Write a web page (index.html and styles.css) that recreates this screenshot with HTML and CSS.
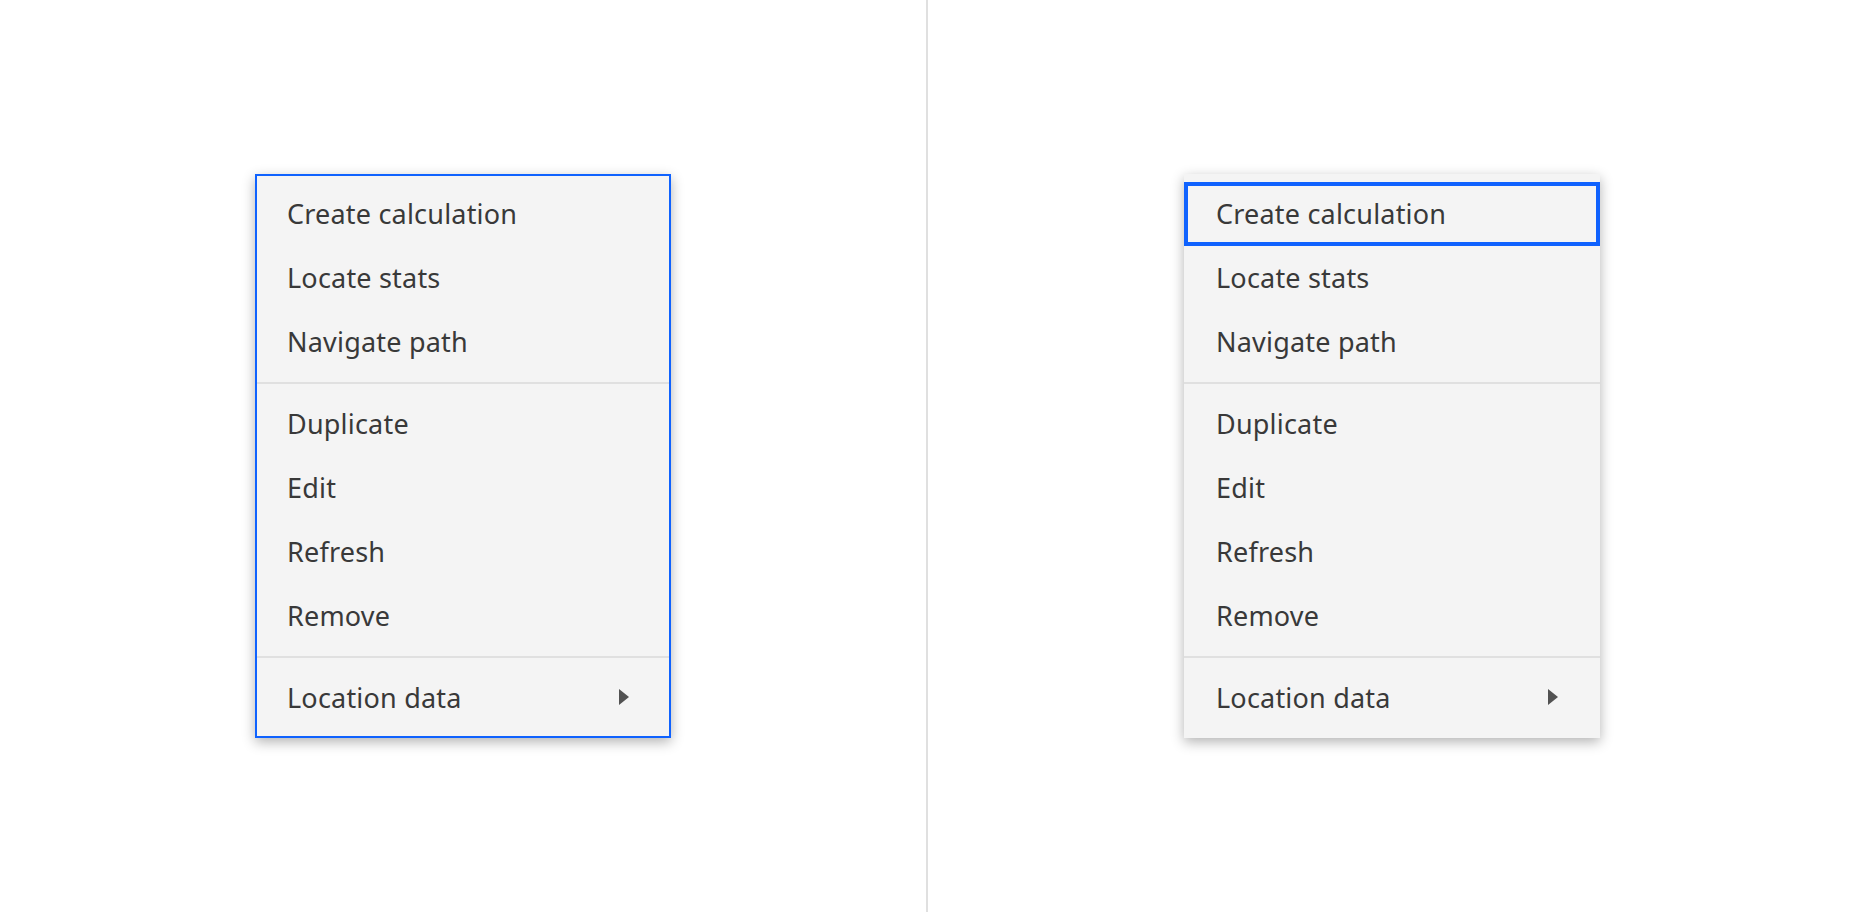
FILE: index.html
```html
<!DOCTYPE html>
<html lang="en">
<head>
<meta charset="utf-8">
<title>Menu</title>
<link rel="stylesheet" href="styles.css">
</head>
<body>
<main class="stage">
  <section class="panel">
    <ul class="menu menu--focused">
      <li class="item">Create calculation</li>
      <li class="item">Locate stats</li>
      <li class="item">Navigate path</li>
      <li class="divider"></li>
      <li class="item">Duplicate</li>
      <li class="item">Edit</li>
      <li class="item">Refresh</li>
      <li class="item">Remove</li>
      <li class="divider"></li>
      <li class="item item--sub">Location data
        <svg class="caret" width="10" height="16" viewBox="0 0 10 16"><path d="M0 0 L10 8 L0 16 Z" fill="#525252"/></svg>
      </li>
    </ul>
  </section>
  <section class="panel panel--right">
    <ul class="menu">
      <li class="item item--focus">Create calculation</li>
      <li class="item">Locate stats</li>
      <li class="item">Navigate path</li>
      <li class="divider"></li>
      <li class="item">Duplicate</li>
      <li class="item">Edit</li>
      <li class="item">Refresh</li>
      <li class="item">Remove</li>
      <li class="divider"></li>
      <li class="item item--sub">Location data
        <svg class="caret" width="10" height="16" viewBox="0 0 10 16"><path d="M0 0 L10 8 L0 16 Z" fill="#525252"/></svg>
      </li>
    </ul>
  </section>
</main>
</body>
</html>
```

FILE: styles.css
```css
* { box-sizing: border-box; }
html, body { margin: 0; padding: 0; height: 100%; background: #ffffff; }
body { font-family: "Noto Sans", "Open Sans", sans-serif; }

.stage {
  display: flex;
  width: 100%;
  height: 100%;
}

.panel {
  flex: 0 0 926px;
  display: flex;
  align-items: center;
  justify-content: center;
}

.panel--right {
  flex: 1 1 auto;
  border-left: 2px solid #e0e0e0;
}

.menu {
  list-style: none;
  margin: 0;
  padding: 8px 0;
  width: 416px;
  background: #f4f4f4;
  box-shadow: 0 4px 12px rgba(0, 0, 0, 0.3);
}

.menu--focused {
  outline: 2px solid #0f62fe;
  outline-offset: -2px;
}

.item {
  height: 64px;
  display: flex;
  align-items: center;
  justify-content: space-between;
  padding: 0 32px 2px 32px;
  font-size: 27px;
  color: #393939;
  letter-spacing: 0.2px;
}

.item--focus {
  outline: 4px solid #0f62fe;
  outline-offset: -4px;
}

.caret { margin-right: 10px; }

.divider {
  height: 2px;
  margin: 8px 0;
  background: #e0e0e0;
}
```
